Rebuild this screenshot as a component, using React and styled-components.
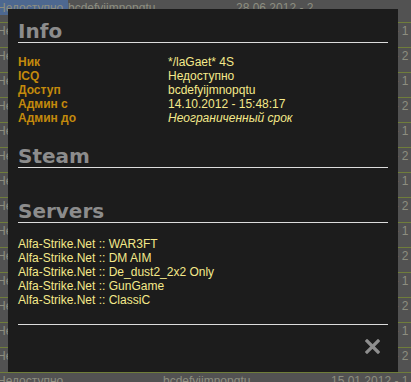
import React from 'react';
import styled, { createGlobalStyle } from 'styled-components';

const GlobalStyle = createGlobalStyle`
  html, body {
    margin: 0;
    padding: 0;
    width: 411px;
    height: 382px;
    overflow: hidden;
    background: #525252;
  }
`;

const dates = ['28.06.2012 - 2', '14.03.2012 - 1', '20.06.2012 - 2', '15.01.2012 - 1'];
const rows = Array.from({ length: 16 }, (_, i) => ({
  nick: 'Недоступно',
  // middle column is hidden by the modal except on the outer rows
  flags: i === 0 || i === 15 ? 'bcdefyijmnopqtu' : '',
  date: dates[i % 4],
}));

const info = [
  { label: 'Ник', value: '*/laGaet* 4S' },
  { label: 'ICQ', value: 'Недоступно' },
  { label: 'Доступ', value: 'bcdefyijmnopqtu' },
  { label: 'Админ с', value: '14.10.2012 - 15:48:17' },
  { label: 'Админ до', value: 'Неограниченный срок', italic: true },
];

const servers = ['WAR3FT', 'DM AIM', 'De_dust2_2x2 Only', 'GunGame', 'ClassiC'];

function App() {
  return (
    <Page>
      <GlobalStyle />
      <Table>
        {rows.map((r, i) => (
          <Row key={i} $first={i === 0}>
            <Cell $w="166px" $hl={i === 0}>{r.nick}</Cell>
            <Cell $w="168px">{r.flags}</Cell>
            <Cell $w="90px">{r.date}</Cell>
          </Row>
        ))}
      </Table>

      <Modal>
        <Heading>Info</Heading>
        <InfoGrid>
          {info.map((item) => (
            <React.Fragment key={item.label}>
              <Label>{item.label}</Label>
              <Value $italic={item.italic}>{item.value}</Value>
            </React.Fragment>
          ))}
        </InfoGrid>

        <Heading>Steam</Heading>
        <Spacer />

        <Heading>Servers</Heading>
        <ServerList>
          {servers.map((s) => (
            <Value key={s}>Alfa-Strike.Net :: {s}</Value>
          ))}
        </ServerList>

        <Footer>
          <Close aria-label="close">
            <svg width="15" height="15" viewBox="0 0 15 15">
              <path d="M2 2 L13 13 M13 2 L2 13" stroke="#8e8e8e" strokeWidth="3.2" strokeLinecap="square" />
            </svg>
          </Close>
        </Footer>
      </Modal>
    </Page>
  );
}

const Page = styled.div`
  position: relative;
  width: 411px;
  height: 382px;
  overflow: hidden;
  background: #525252;
`;

const Table = styled.div`
  display: flex;
  flex-direction: column;
  margin-left: -3px;
`;

const Row = styled.div`
  display: flex;
  height: ${(p) => (p.$first ? '22px' : '24px')};
  align-items: flex-start;
  border-bottom: 1px solid #6f7d3a;
`;

const Cell = styled.div`
  width: ${(p) => p.$w};
  flex-shrink: 0;
  padding-top: 1px;
  font-family: 'Liberation Sans', Arial, sans-serif;
  font-size: 12px;
  color: #8d8e80;
  white-space: nowrap;
  overflow: hidden;
  max-width: ${(p) => (p.$hl ? '71px' : 'none')};
  background: ${(p) => (p.$hl ? '#4d6890' : 'transparent')};
`;

const Modal = styled.div`
  position: absolute;
  left: 8px;
  top: 9px;
  width: 370px;
  height: 363px;
  padding: 0 10px;
  background: #1c1c1c;
  display: flex;
  flex-direction: column;
`;

const Heading = styled.h2`
  margin: 12px 0 0;
  padding-bottom: 1px;
  font-family: 'DejaVu Sans', Verdana, sans-serif;
  font-weight: bold;
  font-size: 20px;
  line-height: 20px;
  color: #8c8c8c;
  border-bottom: 1px solid #dcdcdc;
`;

const InfoGrid = styled.div`
  display: grid;
  grid-template-columns: 150px 1fr;
  grid-auto-rows: 14px;
  margin-top: 12px;
  margin-bottom: 9px;
`;

const Label = styled.div`
  font-family: 'Liberation Sans', Arial, sans-serif;
  font-weight: bold;
  font-size: 12px;
  line-height: 14px;
  color: #c38a0c;
`;

const Value = styled.div`
  font-family: 'Liberation Sans', Arial, sans-serif;
  font-size: 12px;
  line-height: 14px;
  color: #f4e98a;
  font-style: ${(p) => (p.$italic ? 'italic' : 'normal')};
  white-space: nowrap;
`;

const Spacer = styled.div`
  height: 21px;
`;

const ServerList = styled.div`
  display: flex;
  flex-direction: column;
  margin-top: 14px;
  padding-bottom: 17px;
  border-bottom: 1px solid #dcdcdc;
`;

const Footer = styled.div`
  display: flex;
  justify-content: flex-end;
  padding: 14px 8px 0 0;
`;

const Close = styled.span`
  display: flex;
  width: 15px;
  height: 15px;
`;

export default App;
